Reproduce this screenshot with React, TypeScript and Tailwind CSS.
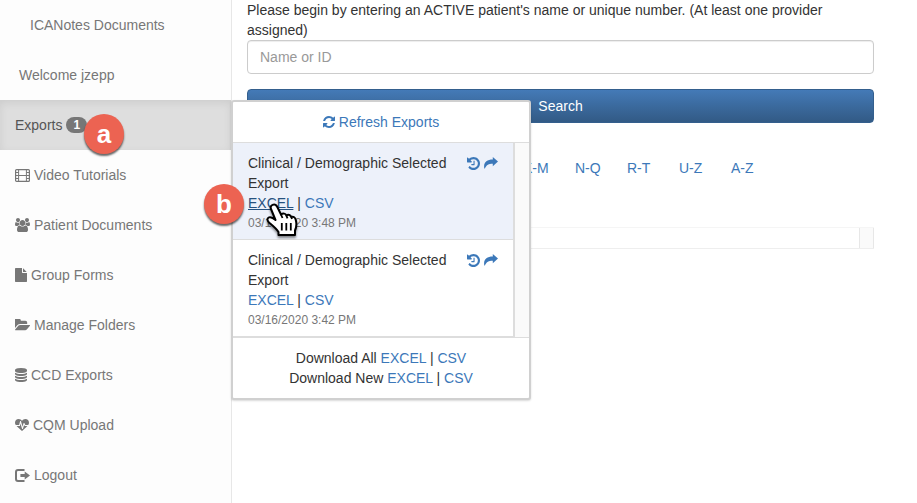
import type { ReactNode } from "react";

type IconProps = { d: string; box: string; className: string };

function Icon({ d, box, className }: IconProps) {
  return (
    <svg viewBox={box} className={className} fill="currentColor" aria-hidden="true">
      <path d={d} />
    </svg>
  );
}

const USERS =
  "M593 896q-162 5-265 128h-134q-82 0-138-40.5t-56-118.5q0-353 124-353 6 0 43.5 21t97.5 42.5 119 21.5q67 0 133-23-5 37-5 66 0 139 81 256zm1071 637q0 120-73 189.5t-194 69.5h-874q-121 0-194-69.5t-73-189.5q0-53 3.5-103.5t14-109 26.5-108.5 43-97.5 62-81 85.5-53.5 111.5-20q10 0 43 21.5t73 48 107 48 135 21.5 135-21.5 107-48 73-48 43-21.5q61 0 111.5 20t85.5 53.5 62 81 43 97.5 26.5 108.5 14 109 3.5 103.5zm-1024-1277q0 106-75 181t-181 75-181-75-75-181 75-181 181-75 181 75 75 181zm704 384q0 159-112.5 271.5t-271.5 112.5-271.5-112.5-112.5-271.5 112.5-271.5 271.5-112.5 271.5 112.5 112.5 271.5zm576 225q0 78-56 118.5t-138 40.5h-134q-103-123-265-128 81-117 81-256 0-29-5-66 66 23 133 23 59 0 119-21.5t97.5-42.5 43.5-21q124 0 124 353zm-128-609q0 106-75 181t-181 75-181-75-75-181 75-181 181-75 181 75 75 181z";
const FILE =
  "M1152 512v-472q22 14 36 28l408 408q14 14 28 36h-472zm-128 32q0 40 28 68t68 28h544v1056q0 40-28 68t-68 28h-1344q-40 0-68-28t-28-68v-1600q0-40 28-68t68-28h800v544z";
const FOLDER =
  "M1815 952q0 31-31 66l-336 396q-43 51-120.5 86.5t-143.5 35.5h-1088q-34 0-60.5-13t-26.5-43q0-31 31-66l336-396q43-51 120.5-86.5t143.5-35.5h1088q34 0 60.5 13t26.5 43zm-343-344v160h-832q-94 0-197 47.5t-164 119.5l-337 396-5 6q0-4-.5-12.5t-.5-12.5v-960q0-92 66-158t158-66h320q92 0 158 66t66 158v32h544q92 0 158 66t66 158z";
const DATABASE =
  "M896 768q237 0 443-43t325-127v170q0 69-103 128t-280 93.5-385 34.5-385-34.5-280-93.5-103-128v-170q119 84 325 127t443 43zm0 768q237 0 443-43t325-127v170q0 69-103 128t-280 93.5-385 34.5-385-34.5-280-93.5-103-128v-170q119 84 325 127t443 43zm0-384q237 0 443-43t325-127v170q0 69-103 128t-280 93.5-385 34.5-385-34.5-280-93.5-103-128v-170q119 84 325 127t443 43zm0-1152q208 0 385 34.5t280 93.5 103 128v128q0 69-103 128t-280 93.5-385 34.5-385-34.5-280-93.5-103-128v-128q0-69 103-128t280-93.5 385-34.5z";
const HEARTBEAT =
  "M1280 896h305q-5 6-10 10.5t-9 7.5l-3 4-623 600q-18 18-44 18t-44-18l-624-602q-5-2-21-20h369q22 0 39.5-13.5t22.5-34.5l70-281 190 667q6 20 23 33t39 13q21 0 38-13t23-33l146-485 56 112q18 35 57 35zm512-428q0 145-103 300h-369l-111-221q-8-17-25.5-27t-36.5-8q-45 5-56 46l-129 430-196-686q-6-20-23.5-33t-39.5-13-39 13.5-22 34.5l-116 464h-423q-103-155-103-300 0-220 127-344t351-124q62 0 126.5 21.5t120 58 95.5 68.5 76 68q36-36 76-68t95.5-68.5 120-58 126.5-21.5q224 0 351 124t127 344z";
const REFRESH =
  "M1639 1056q0 5-1 7-64 268-268 434.5t-478 166.5q-146 0-282.5-55t-243.5-157l-129 129q-19 19-45 19t-45-19-19-45v-448q0-26 19-45t45-19h448q26 0 45 19t19 45-19 45l-137 137q71 66 161 102t187 36q134 0 250-65t186-179q11-17 53-117 8-23 30-23h192q13 0 22.5 9.5t9.5 22.5zm25-800v448q0 26-19 45t-45 19h-448q-26 0-45-19t-19-45 19-45l138-138q-148-137-349-137-134 0-250 65t-186 179q-11 17-53 117-8 23-30 23h-199q-13 0-22.5-9.5t-9.5-22.5v-7q65-268 270-434.5t480-166.5q146 0 284 55.5t245 156.5l130-129q19-19 45-19t45 19 19 45z";
const HISTORY =
  "M1664 896q0 156-61 298t-164 245-245 164-298 61q-172 0-327-72.5t-264-204.5q-7-10-6.5-22.5t8.5-20.5l137-138q10-9 25-9 16 2 23 12 73 95 179 147t225 52q104 0 198.5-40.5t163.5-109.5 109.5-163.5 40.5-198.5-40.5-198.5-109.5-163.5-163.5-109.5-198.5-40.5q-98 0-188 35.5t-160 101.5l137 138q31 30 14 69-17 40-59 40h-448q-26 0-45-19t-19-45v-448q0-42 40-59 39-17 69 14l130 129q107-101 244.5-156.5t284.5-55.5q156 0 298 61t245 164 164 245 61 298zm-640-288v448q0 14-9 23t-23 9h-320q-14 0-23-9t-9-23v-64q0-14 9-23t23-9h224v-352q0-14 9-23t23-9h64q14 0 23 9t9 23z";

function FilmIcon() {
  return (
    <svg viewBox="0 0 15 13" className="h-[13px] w-[15px]" fill="none" stroke="currentColor" aria-hidden="true">
      <rect x="0.6" y="0.6" width="13.8" height="11.8" rx="1" strokeWidth="1.2" />
      <path d="M3.6 0.5v12M11.4 0.5v12M3.6 6.5h7.8M0.5 3.5h3M0.5 6.5h3M0.5 9.5h3M11.5 3.5h3M11.5 6.5h3M11.5 9.5h3" />
    </svg>
  );
}

function LogoutIcon() {
  return (
    <svg viewBox="0 0 15 13" className="h-[13px] w-[15px]" fill="none" aria-hidden="true">
      <path d="M9.500 1H3Q1 1 1 3v7q0 2 2 2h6.500" stroke="currentColor" strokeWidth="2" />
      <path d="M5.400 5h4.300V2.400L15 6.500l-5.300 4.100V8H5.400z" fill="currentColor" />
    </svg>
  );
}

function ShareIcon() {
  return (
    <svg viewBox="0 0 14 12" className="h-3 w-[14px]" fill="currentColor" aria-hidden="true">
      <path d="M8.800 0L14 4.600L8.800 9.200V6.800C5.200 6.700 2.600 7.600 0.900 11.500H0.300C-0.800 5.600 2.700 2.500 8.800 2.500Z" />
    </svg>
  );
}

function PointerHand() {
  return (
    <svg
      viewBox="0 0 32 35"
      className="absolute top-[60px] left-[33px] h-[35px] w-8 drop-shadow-[0_2px_1px_rgba(0,0,0,0.45)]"
      aria-hidden="true"
    >
      <path
        d="M6.500 1.800C9 0.600 10.500 2.200 11.300 4L15 11.500C17.200 9.900 19.500 10.500 20.300 12.300C22.500 11.200 24.500 12 25.200 14C27.500 13.200 29.300 14.400 29.800 17C31 21.500 30.500 24 29 27.500V32H12.500V29C10 25 6 22 3 19.500C0.800 17.400 1 15.200 3 14.400C5 13.700 7.500 15.200 9.500 17L5 6C4.200 4 4.700 2.600 6.500 1.800Z"
        fill="#fff"
        stroke="#000"
        strokeWidth="2"
        strokeLinejoin="round"
      />
      <path
        d="M15 11.500l1.500 3.500M20.300 12.300l1.200 3M25.200 14l0.800 2M15.800 20v7.500M20.300 20v7.500M24.800 20v7.500"
        stroke="#000"
        strokeWidth="1.800"
      />
    </svg>
  );
}

function Marker({ letter, className }: { letter: string; className: string }) {
  return (
    <span
      className={`absolute z-20 flex size-10 items-center justify-center rounded-full bg-[#ec6352] text-[26px] leading-8 font-bold text-white shadow-[0_2px_2px_rgba(0,0,0,0.6)] ${className}`}
    >
      {letter}
    </span>
  );
}

function Link({ children, className = "text-[#3c78b9]" }: { children: ReactNode; className?: string }) {
  return (
    <a href="#" className={className}>
      {children}
    </a>
  );
}

function ExportEntry({ time, active = false }: { time: string; active?: boolean }) {
  return (
    <li
      className={`relative flex items-start justify-between border-r-2 border-b border-[#ddd] pt-[10px] pr-[15px] pb-[6px] pl-[15px] ${
        active ? "bg-[#edf1fa]" : "bg-white"
      }`}
    >
      <div>
        <p className="w-[205px]">Clinical / Demographic Selected Export</p>
        <p>
          <Link className={active ? "text-[#27527f] underline" : "text-[#3c78b9]"}>EXCEL</Link> | <Link>CSV</Link>
        </p>
        <p className="text-xs leading-5 text-[#777]">{time}</p>
      </div>
      <div className="flex h-5 items-center gap-1 text-[#3c78b9]">
        <button type="button" aria-label="Export history">
          <Icon d={HISTORY} box="128 128 1536 1536" className="size-[13px]" />
        </button>
        <button type="button" aria-label="Share export">
          <ShareIcon />
        </button>
      </div>
      {active && <PointerHand />}
    </li>
  );
}

function ExportsMenu() {
  return (
    <div className="absolute top-0 left-full z-10 w-[300px] rounded-[3px] border-2 border-[#d0d0d0] bg-white text-[#333] shadow-[0_1px_2px_rgba(0,0,0,0.15)]">
      <button
        type="button"
        className="flex h-[41px] w-full items-center justify-center gap-1 border-b border-[#ddd] text-[#3c78b9]"
      >
        <Icon d={REFRESH} box="128 128 1536 1536" className="size-3" />
        Refresh Exports
      </button>
      <ul className="bg-[#fafafa] pr-[14px]">
        <ExportEntry time="03/16/2020 3:48 PM" active />
        <ExportEntry time="03/16/2020 3:42 PM" />
      </ul>
      <div className="border-t border-[#ddd] py-[10px] text-center">
        <p>
          Download All <Link>EXCEL</Link> | <Link>CSV</Link>
        </p>
        <p>
          Download New <Link>EXCEL</Link> | <Link>CSV</Link>
        </p>
      </div>
    </div>
  );
}

const navItems = [
  { label: "Video Tutorials", icon: <FilmIcon /> },
  { label: "Patient Documents", icon: <Icon d={USERS} box="0 0 1920 1792" className="h-[14px] w-[15px]" /> },
  { label: "Group Forms", icon: <Icon d={FILE} box="128 0 1536 1792" className="h-[14px] w-3" /> },
  { label: "Manage Folders", icon: <Icon d={FOLDER} box="0 256 1815 1280" className="h-3 w-[15px]" /> },
  { label: "CCD Exports", icon: <Icon d={DATABASE} box="128 0 1536 1792" className="h-[14px] w-3" /> },
  { label: "CQM Upload", icon: <Icon d={HEARTBEAT} box="0 0 1792 1536" className="h-3 w-[14px]" /> },
  { label: "Logout", icon: <LogoutIcon /> },
];

const ranges = ["K-M", "N-Q", "R-T", "U-Z", "A-Z"];

export default function App() {
  return (
    <div className="flex min-h-screen bg-white font-['Liberation_Sans',Arial,sans-serif] text-[14px] leading-5 text-[#333]">
      <nav className="w-[232px] shrink-0 border-r border-[#e7e7e7] bg-[#fdfdfd] text-[#777]">
        <a href="#" className="flex h-[50px] items-center pl-[30px]">
          ICANotes Documents
        </a>
        <p className="flex h-[50px] items-center pl-[19px]">Welcome jzepp</p>
        <div className="relative">
          <a
            href="#"
            className="flex h-[50px] items-center gap-1 bg-[#dedede] pl-[15px] text-[#555] shadow-[inset_0_3px_9px_rgba(0,0,0,0.08)]"
          >
            Exports
            <span className="rounded-full bg-[#777] px-[7px] py-[2px] text-xs leading-3 font-bold text-white">1</span>
          </a>
          <Marker letter="a" className="top-[14px] left-[84px]" />
          <Marker letter="b" className="top-[84px] left-[204px]" />
          <ExportsMenu />
        </div>
        {navItems.map((item) => (
          <a key={item.label} href="#" className="flex h-[50px] items-center gap-1 pl-[15px]">
            {item.icon}
            {item.label}
          </a>
        ))}
      </nav>
      <main className="min-w-0 flex-1 pr-[43px] pl-[15px]">
        <label htmlFor="patient" className="block">
          Please begin by entering an ACTIVE patient's name or unique number. (At least one provider assigned)
        </label>
        <input
          id="patient"
          type="text"
          placeholder="Name or ID"
          className="block h-[34px] w-full rounded border border-[#ccc] bg-white px-3 shadow-[inset_0_1px_1px_rgba(0,0,0,0.075)] placeholder:text-[#999]"
        />
        <button
          type="button"
          className="mt-[15px] block h-[34px] w-full rounded border border-[#345f8d] bg-linear-to-b from-[#447ab7] to-[#325a85] text-white"
        >
          Search
        </button>
        <div className="mt-[35px] flex pl-[276px]">
          {ranges.map((range) => (
            <a key={range} href="#" className="w-[52px] text-[#3c78b9]">
              {range}
            </a>
          ))}
        </div>
        <div className="mt-[49px] flex h-[22px] justify-end border-t border-b border-t-[#f5f5f5] border-b-[#eee]">
          <div className="w-[15px] border-r border-l border-[#e7e7e7] bg-[#fafafa]" />
        </div>
      </main>
    </div>
  );
}
